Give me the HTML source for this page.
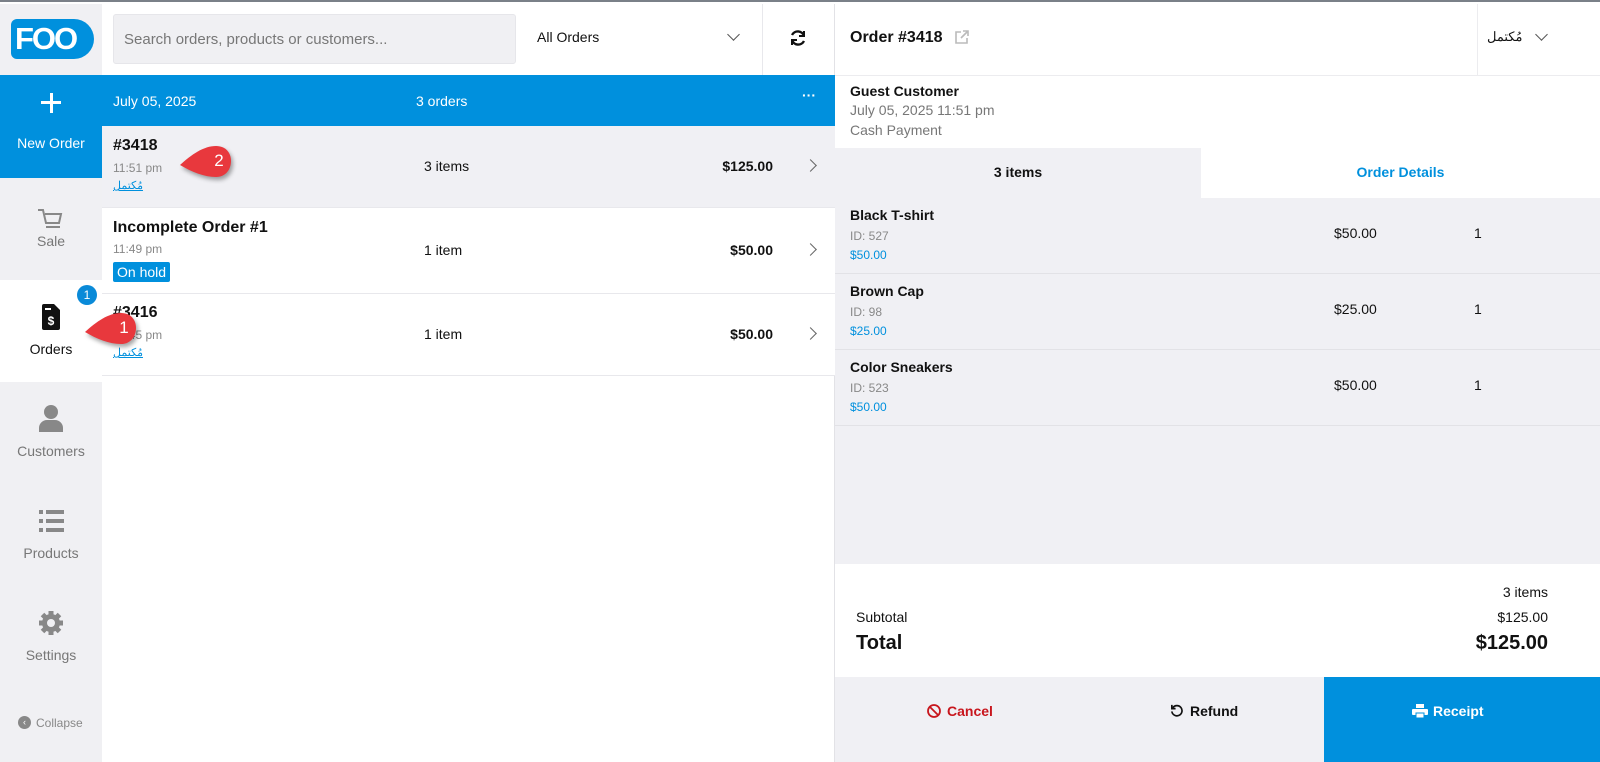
<!DOCTYPE html>
<html><head><meta charset="utf-8"><style>
*{box-sizing:border-box;margin:0;padding:0}
body{width:1600px;height:760px;overflow:hidden;font-family:"Liberation Sans","Noto Sans CJK SC",sans-serif;background:#fff;position:relative;border-top:2px solid #7a8088}
.abs{position:absolute}
.side{left:0;top:2px;width:102px;height:758px;background:#f0f0f3}
.nav{position:absolute;left:0;width:102px;height:102px;text-align:center;color:#777;font-size:14px}
.nav .lbl{position:absolute;left:0;right:0;top:58px}
.row{position:absolute;left:102px;width:733px;border-bottom:1px solid #e8e8ec;background:#fff}
.row .t{position:absolute;left:11px;font-size:16px;font-weight:bold;color:#111}
.row .tm{position:absolute;left:11px;font-size:12px;color:#888}
.row .st{position:absolute;left:11px;font-size:11px;color:#0090dd;text-decoration:underline}
.row .it{position:absolute;left:322px;font-size:14px;color:#111}
.row .pr{position:absolute;right:62px;font-size:14px;font-weight:bold;color:#111}
.row .ch{position:absolute;right:20px;width:9px;height:9px;border-right:1.5px solid #666;border-top:1.5px solid #666;transform:rotate(45deg)}
.prod{position:absolute;left:835px;width:765px;height:76px;background:#f0f0f4;border-bottom:1px solid #e2e2e6}
.prod .n{position:absolute;left:15px;top:9px;font-size:14px;font-weight:bold;color:#111}
.prod .id{position:absolute;left:15px;top:31px;font-size:12px;color:#888}
.prod .p{position:absolute;left:15px;top:50px;font-size:12px;color:#0090dd}
.prod .pp{position:absolute;left:499px;top:27px;font-size:14px;color:#111}
.prod .q{position:absolute;left:639px;top:27px;font-size:14px;color:#111}
.callout{position:absolute;width:60px;height:40px}
.callout span{position:absolute;left:30px;top:9px;width:22px;text-align:center;color:#fff;font-size:17px}
</style></head><body>
<div class="abs side"></div>
<!-- logo -->
<div class="abs" style="left:11px;top:17px;width:83px;height:40px;background:#0090dd;border-radius:6px 20px 20px 6px;color:#fff;font-weight:bold;font-size:31px;line-height:40px;padding-left:4px;letter-spacing:-2px;font-family:'Liberation Sans',sans-serif">FOO</div>
<div class="nav" style="top:73px;height:103px;background:#0090dd;color:#fff">
 <div class="abs" style="left:41px;top:26px;width:20px;height:3px;background:#fff"></div>
 <div class="abs" style="left:49.5px;top:18px;width:3px;height:20px;background:#fff"></div>
 <div class="lbl" style="top:60px">New Order</div></div>
<div class="nav" style="top:176px">
 <svg class="abs" style="left:37px;top:30px" width="26" height="22" viewBox="0 0 26 22" fill="none" stroke="#888" stroke-width="2"><path d="M1 2h5l3 13h13l2-9H8"/><path d="M9 19h14"/></svg>
 <div class="lbl" style="top:55px">Sale</div></div>
<div class="nav" style="top:278px;background:#fff;color:#111">
 <svg class="abs" style="left:41px;top:24px" width="20" height="26" viewBox="0 0 20 26"><path d="M1 2a2 2 0 012-2h10l6 6v18a2 2 0 01-2 2H3a2 2 0 01-2-2z" fill="#111"/><text x="10" y="21" font-size="12" fill="#fff" text-anchor="middle" font-weight="bold" font-family="Liberation Sans">$</text><rect x="4" y="4" width="6" height="2" fill="#fff"/></svg>
 <div class="lbl" style="top:61px">Orders</div></div>
<div class="abs" style="left:77px;top:283px;width:20px;height:20px;border-radius:50%;background:#0a8ad8;color:#fff;font-size:12px;text-align:center;line-height:20px">1</div>
<div class="nav" style="top:380px">
 <svg class="abs" style="left:39px;top:22px" width="24" height="28" viewBox="0 0 24 28" fill="#888"><circle cx="12" cy="8" r="7"/><path d="M0 28v-4a8 8 0 018-8h8a8 8 0 018 8v4z"/></svg>
 <div class="lbl" style="top:61px">Customers</div></div>
<div class="nav" style="top:482px">
 <svg class="abs" style="left:39px;top:26px" width="25" height="22" viewBox="0 0 25 22" fill="#888"><rect x="0" y="0" width="4" height="4"/><rect x="7" y="0" width="18" height="4"/><rect x="0" y="9" width="4" height="4"/><rect x="7" y="9" width="18" height="4"/><rect x="0" y="18" width="4" height="4"/><rect x="7" y="18" width="18" height="4"/></svg>
 <div class="lbl" style="top:61px">Products</div></div>
<div class="nav" style="top:584px">
 <svg class="abs" style="left:38px;top:24px" width="26" height="26" viewBox="0 0 26 26"><circle cx="13" cy="13" r="9" fill="#888"/><g stroke="#888" stroke-width="5"><path d="M13 1v24M1 13h24M4.5 4.5l17 17M21.5 4.5l-17 17"/></g><circle cx="13" cy="13" r="4" fill="#f0f0f3"/></svg>
 <div class="lbl" style="top:61px">Settings</div></div>
<div class="abs" style="left:18px;top:714px;width:13px;height:13px;border-radius:50%;background:#888;color:#fff;font-size:9px;text-align:center;line-height:13px">‹</div>
<div class="abs" style="left:36px;top:714px;font-size:12px;color:#888">Collapse</div>

<!-- middle top -->
<div class="abs" style="left:113px;top:12px;width:403px;height:50px;background:#f0f0f3;border:1px solid #e6e6ea;border-radius:3px;font-size:15px;color:#777;padding:16px 10px">Search orders, products or customers...</div>
<div class="abs" style="left:537px;top:27px;font-size:14px;color:#111">All Orders</div>
<div class="abs" style="left:729px;top:28px;width:9px;height:9px;border-right:1.5px solid #555;border-bottom:1.5px solid #555;transform:rotate(45deg)"></div>
<div class="abs" style="left:762px;top:2px;width:1px;height:71px;background:#e8e8ec"></div>
<svg class="abs" style="left:789px;top:27px" width="18" height="18" viewBox="0 0 18 18" fill="none" stroke="#111" stroke-width="2.4"><path d="M15 7A6.5 6.5 0 003 6M3 11a6.5 6.5 0 0012 1"/><path d="M15 2v5h-5M3 16v-5h5" stroke-width="2"/></svg>
<div class="abs" style="left:834px;top:2px;width:1px;height:758px;background:#e2e2e6"></div>

<div class="abs" style="left:102px;top:73px;width:733px;height:51px;background:#0090dd;color:#fff;font-size:14px">
 <span class="abs" style="left:11px;top:18px">July 05, 2025</span>
 <span class="abs" style="left:314px;top:18px">3 orders</span>
 <span class="abs" style="left:700px;top:12px;font-weight:bold">···</span></div>

<div class="row" style="top:124px;height:82px;background:#f0f0f4">
 <div class="t" style="top:11px">#3418</div><div class="tm" style="top:35px">11:51 pm</div><div class="st" style="top:53px">مُكتمل</div>
 <div class="it" style="top:32px">3 items</div><div class="pr" style="top:32px">$125.00</div><div class="ch" style="top:35px"></div></div>
<div class="row" style="top:206px;height:86px">
 <div class="t" style="top:11px">Incomplete Order #1</div><div class="tm" style="top:34px">11:49 pm</div>
 <div class="abs" style="left:11px;top:54px;background:#0090dd;color:#fff;font-size:14px;padding:2px 4px;border-radius:2px">On hold</div>
 <div class="it" style="top:34px">1 item</div><div class="pr" style="top:34px">$50.00</div><div class="ch" style="top:37px"></div></div>
<div class="row" style="top:292px;height:82px">
 <div class="t" style="top:10px">#3416</div><div class="tm" style="top:34px">11:45 pm</div><div class="st" style="top:52px">مُكتمل</div>
 <div class="it" style="top:32px">1 item</div><div class="pr" style="top:32px">$50.00</div><div class="ch" style="top:35px"></div></div>

<div class="callout" style="left:178px;top:140px"><svg width="60" height="40" viewBox="0 0 60 40" style="filter:drop-shadow(2px 3px 2px rgba(0,0,0,.35))"><path d="M2 23C14 12 26 4 38 4c10 0 15 7 15 15s-5 16-15 16C26 35 14 30 2 23z" fill="#e8383d"/></svg><span>2</span></div>
<div class="callout" style="left:83px;top:307px"><svg width="60" height="40" viewBox="0 0 60 40" style="filter:drop-shadow(2px 3px 2px rgba(0,0,0,.35))"><path d="M2 23C14 12 26 4 38 4c10 0 15 7 15 15s-5 16-15 16C26 35 14 30 2 23z" fill="#e8383d"/></svg><span>1</span></div>

<!-- right -->
<div class="abs" style="left:850px;top:27px;font-size:16px;font-weight:bold;color:#111">Order #3418</div>
<svg class="abs" style="left:955px;top:28px" width="14" height="14" viewBox="0 0 14 14" fill="none" stroke="#bbb" stroke-width="1.6"><path d="M6 2H1v11h11V8M8 1h5v5M13 1L6 8"/></svg>
<div class="abs" style="left:1477px;top:2px;width:1px;height:71px;background:#ececef"></div>
<div class="abs" style="left:1487px;top:27px;font-size:13px;color:#111">مُكتمل</div>
<div class="abs" style="left:1537px;top:28px;width:9px;height:9px;border-right:1.3px solid #555;border-bottom:1.3px solid #555;transform:rotate(45deg)"></div>
<div class="abs" style="left:835px;top:73px;width:765px;height:1px;background:#ececef"></div>
<div class="abs" style="left:850px;top:81px;font-size:14px;font-weight:bold;color:#111">Guest Customer</div>
<div class="abs" style="left:850px;top:100px;font-size:14px;color:#777">July 05, 2025 11:51 pm</div>
<div class="abs" style="left:850px;top:120px;font-size:14px;color:#777">Cash Payment</div>
<div class="abs" style="left:835px;top:146px;width:366px;height:50px;background:#f0f0f4;font-size:14px;font-weight:bold;color:#111;text-align:center;line-height:48px">3 items</div>
<div class="abs" style="left:1201px;top:146px;width:399px;height:50px;background:#fff;font-size:14px;font-weight:bold;color:#0090dd;text-align:center;line-height:48px">Order Details</div>
<div class="abs" style="left:835px;top:196px;width:765px;height:366px;background:#f0f0f4"></div>
<div class="prod" style="top:196px"><div class="n">Black T-shirt</div><div class="id">ID: 527</div><div class="p">$50.00</div><div class="pp">$50.00</div><div class="q">1</div></div>
<div class="prod" style="top:272px"><div class="n">Brown Cap</div><div class="id">ID: 98</div><div class="p">$25.00</div><div class="pp">$25.00</div><div class="q">1</div></div>
<div class="prod" style="top:348px"><div class="n">Color Sneakers</div><div class="id">ID: 523</div><div class="p">$50.00</div><div class="pp">$50.00</div><div class="q">1</div></div>
<div class="abs" style="right:52px;top:582px;font-size:14px;color:#111">3 items</div>
<div class="abs" style="left:856px;top:607px;font-size:14px;color:#111">Subtotal</div>
<div class="abs" style="right:52px;top:607px;font-size:14px;color:#111">$125.00</div>
<div class="abs" style="left:856px;top:630px;font-size:20px;font-weight:bold;color:#111">Total</div>
<div class="abs" style="right:52px;top:630px;font-size:20px;font-weight:bold;color:#111">$125.00</div>
<div class="abs" style="left:835px;top:675px;width:489px;height:85px;background:#f0f0f4"></div>
<svg class="abs" style="left:927px;top:702px" width="14" height="14" viewBox="0 0 14 14" fill="none" stroke="#c8161d" stroke-width="1.8"><circle cx="7" cy="7" r="6"/><path d="M3 3l8 8"/></svg>
<div class="abs" style="left:947px;top:701px;font-size:14px;font-weight:bold;color:#c8161d">Cancel</div>
<svg class="abs" style="left:1170px;top:702px" width="13" height="13" viewBox="0 0 14 14" fill="none" stroke="#111" stroke-width="1.8"><path d="M3 4a5.5 5.5 0 11-1 4"/><path d="M2 1v4h4"/></svg>
<div class="abs" style="left:1190px;top:701px;font-size:14px;font-weight:bold;color:#111">Refund</div>
<div class="abs" style="left:1324px;top:675px;width:276px;height:85px;background:#0090dd"></div>
<svg class="abs" style="left:1412px;top:702px" width="16" height="14" viewBox="0 0 16 14" fill="#fff"><rect x="4" y="0" width="8" height="4"/><rect x="0" y="5" width="16" height="6" rx="1"/><rect x="4" y="9" width="8" height="5" fill="#fff" stroke="#0090dd"/></svg>
<div class="abs" style="left:1433px;top:701px;font-size:14px;font-weight:bold;color:#fff">Receipt</div>
</body></html>
